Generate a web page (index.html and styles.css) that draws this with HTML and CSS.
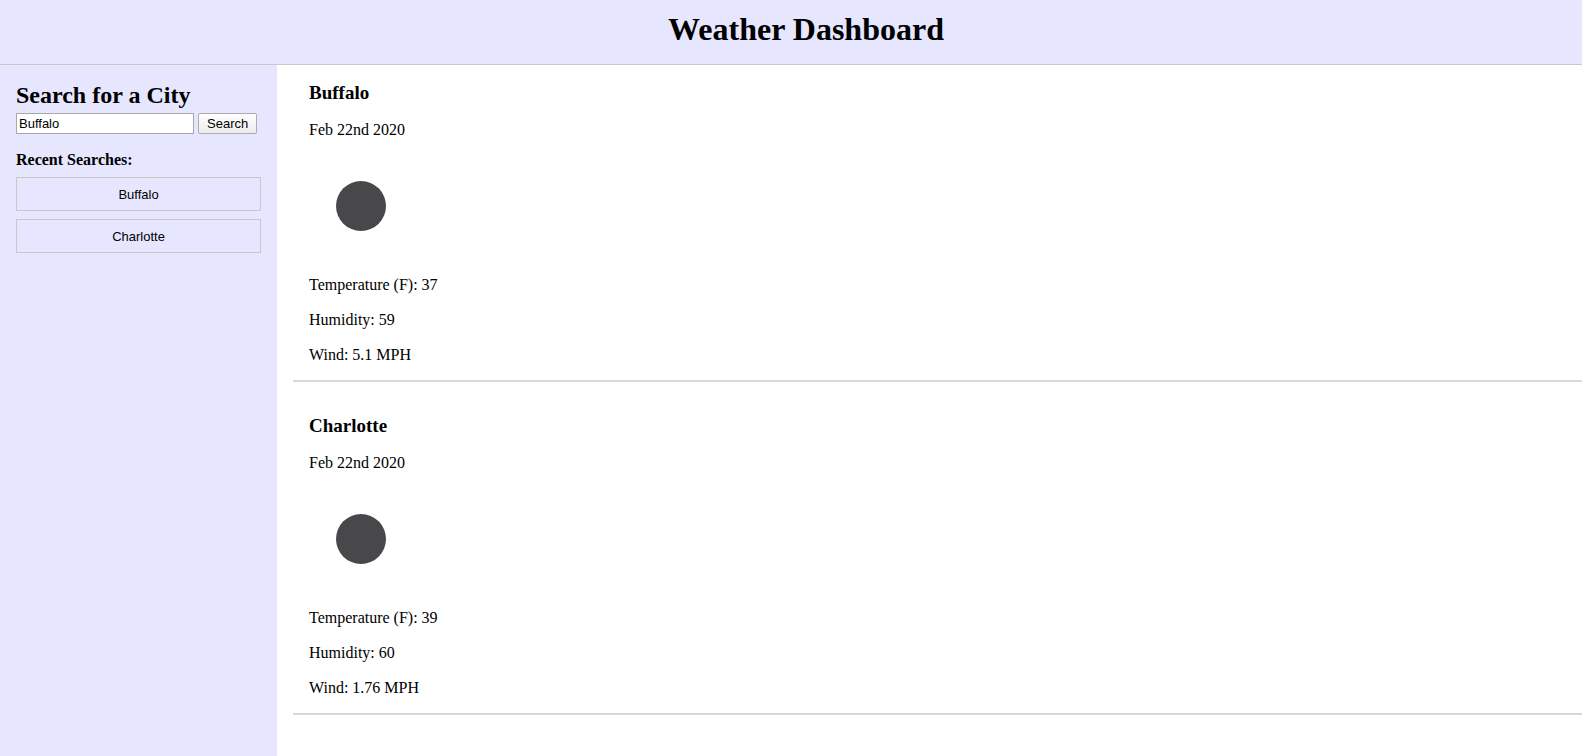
FILE: index.html
```html
<!DOCTYPE html>
<html lang="en">
<head>
<meta charset="utf-8">
<title>Weather Dashboard</title>
<link rel="stylesheet" href="styles.css">
</head>
<body>
<header class="header"><h1 class="title">Weather Dashboard</h1></header>
<main class="layout">
  <aside class="sidebar">
    <h2 class="search-title"><label for="city">Search for a City</label></h2>
    <form class="search-form">
      <input class="search-input" id="city" type="text" value="Buffalo">
      <button class="search-button" type="button">Search</button>
    </form>
    <h4 class="recent-title">Recent Searches:</h4>
    <div class="recent-list">
      <button class="recent-city" type="button">Buffalo</button>
      <button class="recent-city" type="button">Charlotte</button>
    </div>
  </aside>
  <section class="results">
    <article class="city">
      <h3 class="city-name">Buffalo</h3>
      <p class="city-line">Feb 22nd 2020</p>
      <svg class="city-icon" viewBox="0 0 104 104" role="img" aria-label="Clouds"><circle cx="52" cy="51" r="25" fill="#48484a"/></svg>
      <p class="city-line">Temperature (F): 37</p>
      <p class="city-line">Humidity: 59</p>
      <p class="city-line">Wind: 5.1 MPH</p>
    </article>
    <article class="city">
      <h3 class="city-name">Charlotte</h3>
      <p class="city-line">Feb 22nd 2020</p>
      <svg class="city-icon" viewBox="0 0 104 104" role="img" aria-label="Clouds"><circle cx="52" cy="51" r="25" fill="#48484a"/></svg>
      <p class="city-line">Temperature (F): 39</p>
      <p class="city-line">Humidity: 60</p>
      <p class="city-line">Wind: 1.76 MPH</p>
    </article>
  </section>
</main>
</body>
</html>
```
FILE: styles.css
```css
* { box-sizing: border-box; }
body {
  margin: 0;
  min-height: 100vh;
  display: flex;
  flex-direction: column;
  font: 16px/19px "Liberation Serif", "Times New Roman", serif;
  color: #000;
  background: #fff;
}
h1, h2, h3, h4, p { margin: 0; }
.header {
  padding: 11px 16px 16px 46px;
  background: #e6e6ff;
  border-bottom: 1px solid #c8c8c8;
  text-align: center;
}
.title { font-size: 32px; line-height: 37px; }
.layout { flex: 1; display: flex; }
.sidebar {
  width: 277px;
  flex: none;
  padding: 16px;
  background: #e6e6ff;
}
.search-title { font-size: 24px; line-height: 28px; }
.search-form { display: flex; gap: 4px; margin-top: 4px; }
.search-input, .search-button, .recent-city {
  font: 13px/15px "Liberation Sans", Arial, sans-serif;
  color: #000;
}
.search-input {
  width: 178px;
  height: 21px;
  padding: 1px 2px;
  border: 1px solid #a9a9a9;
  background: #fff;
}
.search-button {
  height: 21px;
  padding: 0 8px;
  border: 1px solid #adadad;
  border-radius: 2px;
  background: linear-gradient(#fff, #ececec);
}
.recent-title { margin-top: 16px; }
.recent-list { display: grid; gap: 8px; margin-top: 8px; }
.recent-city {
  height: 34px;
  padding: 0;
  border: 1px solid #c8c8c8;
  background: transparent;
}
.results { flex: 1; padding-left: 16px; }
.city {
  padding: 17px 16px 16px;
  border-bottom: 2px solid #d8d8d8;
}
.city + .city { margin-top: 16px; }
.city-name { font-size: 19px; line-height: 22px; }
.city-line { margin-top: 16px; }
.city-icon { display: block; width: 104px; height: 104px; margin-top: 16px; }
```
